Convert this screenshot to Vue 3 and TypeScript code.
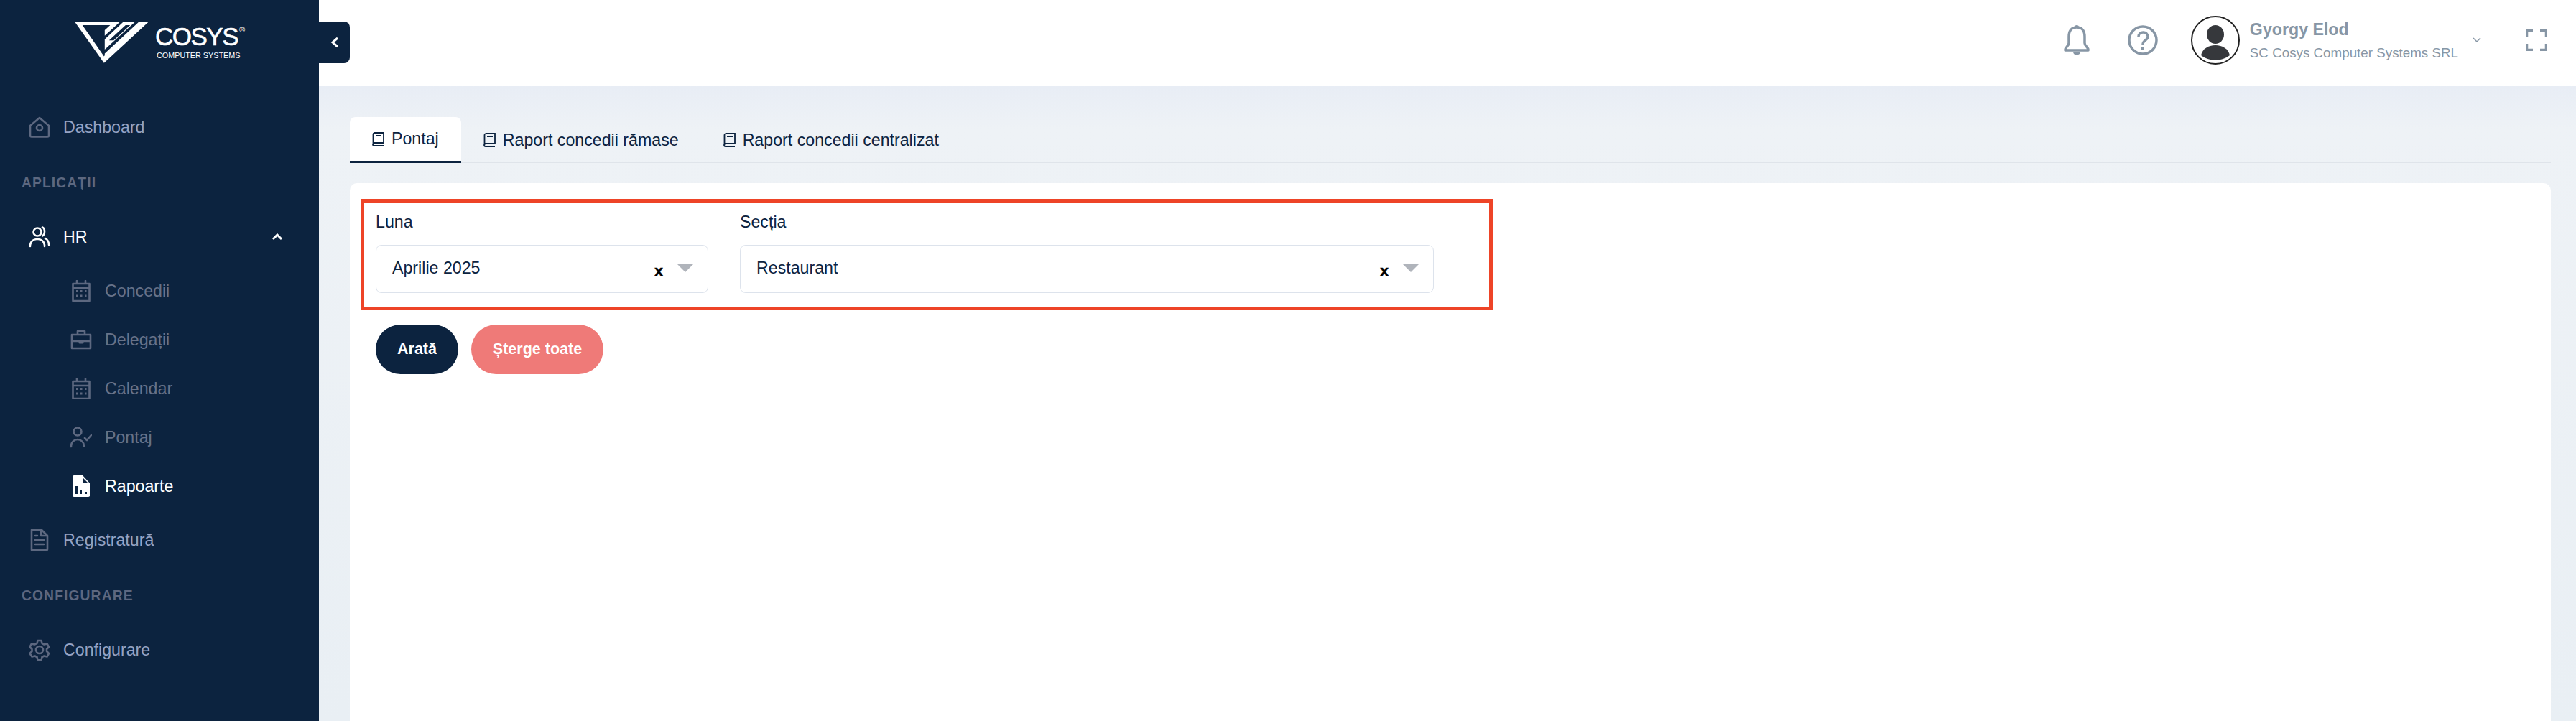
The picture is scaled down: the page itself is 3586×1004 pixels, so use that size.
<template>
  <div class="app">
    <aside class="sidebar">
      <div class="logo">
        <svg class="logo-mark" viewBox="133 90 308 172" width="103" height="58">
          <path fill="#fff" d="M133 90H300L283 104H165L255 234 258 230V222L401 90H441L255 262Z" />
          <path fill="#fff" fill-rule="evenodd" d="M258 125L296 90H322L258 148ZM258 163L336 90H385L258 206ZM345 104H364L295 168H276Z" />
        </svg>
        <div class="logo-text">
          <span class="logo-name">COSYS<sup>®</sup></span>
          <span class="logo-sub">COMPUTER SYSTEMS</span>
        </div>
      </div>

      <a class="item">
        <svg class="icon" viewBox="0 0 30 30"><path d="M2 13L15 2l13 11v13.500a2 2 0 0 1-2 2H4a2 2 0 0 1-2-2z" /><circle cx="15" cy="16" r="4" /></svg>
        <span>Dashboard</span>
      </a>
      <div class="section">APLICAȚII</div>
      <a class="item open">
        <svg class="icon" viewBox="0 0 30 30"><circle cx="12" cy="8" r="5.500" /><path d="M2 28v-2a9 9 0 0 1 9-8h2a9 9 0 0 1 9 8v2M19 1.500c4 1.500 4 10 0 12M23 17c3 1 5 5 5 9" /></svg>
        <span>HR</span>
        <svg class="chevron" viewBox="0 0 16 10"><path d="M2 8l6-6 6 6" /></svg>
      </a>
      <div class="subs">
        <a v-for="sub in subItems" :key="sub.label" class="sub" :class="{ active: sub.active }">
          <svg v-if="sub.icon === 'calendar'" class="icon" viewBox="0 0 30 30"><path d="M3.500 5h23v24h-23zM3.500 11h23M9 1v4M21 1v4" /><path class="dots" d="M8 15.500h2.500M14 15.500h2.500M20 15.500h2.500M8 22h2.500M14 22h2.500M20 22h2.500" /></svg>
          <svg v-else-if="sub.icon === 'briefcase'" class="icon" viewBox="0 0 30 30"><path d="M2 8h26v19H2zM2 17h26M10 8V3h10v5" /><path class="dots" d="M13 17v2h4v-2" /></svg>
          <svg v-else-if="sub.icon === 'user'" class="icon" viewBox="0 0 30 30"><circle cx="10" cy="7" r="5.500" /><path d="M1 28v-1a9 9 0 0 1 18 0M20 16l3 3 6-7" /></svg>
          <svg v-else class="icon filled" viewBox="0 0 30 30"><path fill-rule="evenodd" d="M5 0h12l10 11v17a2 2 0 0 1-2 2H5a2 2 0 0 1-2-2V2a2 2 0 0 1 2-2zM17 3v8h8zM7 15v11h3V15zM13 20v6h3v-6zM20 23v3h3v-3z" /></svg>
          <span>{{ sub.label }}</span>
        </a>
      </div>
      <a class="item registry">
        <svg class="icon" viewBox="0 0 30 30"><path d="M4 1h14l8 8v19a1 1 0 0 1-1 1H4zM17 1v8h9M9 15h12M9 21h12M9 9h3" /></svg>
        <span>Registratură</span>
      </a>
      <div class="section">CONFIGURARE</div>
      <a class="item">
        <svg class="icon" viewBox="0 0 30 30"><circle cx="15" cy="15" r="5" /><path d="M12.500 2h5l1 4 3 1.500 4-1 2.500 4.500-3 3v3l3 3-2.500 4.500-4-1-3 1.500-1 4h-5l-1-4-3-1.500-4 1L1.500 20l3-3v-3l-3-3L4 6.500l4 1L11.500 6z" /></svg>
        <span>Configurare</span>
      </a>
    </aside>

    <div class="main">
      <header class="topbar">
        <button class="collapse" type="button" aria-label="Restrânge meniul">
          <svg viewBox="0 0 12 16" width="12" height="16"><path d="M10 2L3 8l7 6" /></svg>
        </button>
        <div class="top-actions">
          <svg class="top-icon" viewBox="0 0 38 42" width="38" height="42"><path d="M19 3c-8 0-11 6-11 13v9c0 4-5 6-5 9v1h32v-1c0-3-5-5-5-9v-9c0-7-3-13-11-13z" /><path class="solid" d="M14 37h10c0 6-10 6-10 0zM16 3a3 3 0 0 1 6 0z" /></svg>
          <svg class="top-icon help" viewBox="0 0 42 42" width="42" height="42"><circle cx="21" cy="21" r="19" /><path d="M15 16c0-8 13-8 13 0 0 5-7 5-7 11" /><path class="solid" d="M19 30h4v4h-4z" /></svg>
          <div class="user">
            <svg class="avatar" viewBox="0 0 68 68" width="68" height="68"><circle cx="34" cy="34" r="33" /><ellipse class="solid" cx="34" cy="26" rx="12" ry="13" /><path class="solid" d="M14 55c2-9 10-14 20-14s18 5 20 14c-11 9-29 9-40 0z" /></svg>
            <div class="user-text">
              <strong>Gyorgy Elod</strong>
              <span>SC Cosys Computer Systems SRL</span>
            </div>
            <svg class="user-caret" viewBox="0 0 12 8" width="12" height="8"><path d="M1 1l5 5 5-5" /></svg>
          </div>
          <svg class="top-icon expand" viewBox="0 0 30 30" width="30" height="30"><path d="M1.500 10V1.500H10M20 1.500h8.500V10M1.500 20v8.500H10M20 28.500h8.500V20" /></svg>
        </div>
      </header>

      <main class="content">
        <nav class="tabs">
          <a v-for="(tab, i) in tabs" :key="tab" class="tab" :class="{ active: i === 0 }">
            <svg class="book" viewBox="0 0 18 20" width="18" height="20"><path d="M3 1h13v14H3a2 2 0 0 0 0 4h13M1.500 17V3A2 2 0 0 1 3 1M5 5h8" /></svg>
            {{ tab }}
          </a>
        </nav>
        <section class="card">
          <div class="filters">
            <div v-for="field in fields" :key="field.label" class="field" :class="field.cls">
              <label>{{ field.label }}</label>
              <div class="select">
                <span class="value">{{ field.value }}</span>
                <span class="clear">x</span>
                <span class="arrow"></span>
              </div>
            </div>
          </div>
          <div class="buttons">
            <button class="btn primary" type="button">Arată</button>
            <button class="btn danger" type="button">Șterge toate</button>
          </div>
        </section>
      </main>
    </div>
  </div>
</template>

<script setup lang="ts">
type SubItem = {
  label: string
  icon: 'calendar' | 'briefcase' | 'user' | 'file'
  active?: boolean
}

const subItems: SubItem[] = [
  { label: 'Concedii', icon: 'calendar' },
  { label: 'Delegații', icon: 'briefcase' },
  { label: 'Calendar', icon: 'calendar' },
  { label: 'Pontaj', icon: 'user' },
  { label: 'Rapoarte', icon: 'file', active: true },
]

const tabs = ['Pontaj', 'Raport concedii rămase', 'Raport concedii centralizat']

const fields = [
  { label: 'Luna', value: 'Aprilie 2025', cls: 'month' },
  { label: 'Secția', value: 'Restaurant', cls: 'dept' },
]
</script>

<style>
html,
body {
  margin: 0;
  overflow: hidden;
}
</style>

<style scoped>
.app {
  display: flex;
  height: 1004px;
  overflow: hidden;
  font-family: "Liberation Sans", Arial, sans-serif;
  font-size: 23.2px;
  color: #0c233f;
}

.sidebar {
  flex: 0 0 444px;
  background: #0c233f;
  color: #96a3c4;
}

.logo {
  display: flex;
  height: 143px;
  box-sizing: border-box;
  padding: 30px 0 0 104px;
  gap: 9px;
  align-items: flex-start;
}

.logo-text {
  display: flex;
  flex-direction: column;
  color: #fff;
}

.logo-name {
  font-size: 35px;
  line-height: 30px;
  margin-top: 6px;
  letter-spacing: -1.5px;
  -webkit-text-stroke: 0.6px #fff;
}

.logo-name sup {
  font-size: 11px;
  line-height: 0;
  letter-spacing: 0;
  vertical-align: 18px;
  margin-left: 2px;
  -webkit-text-stroke: 0;
}

.logo-sub {
  font-size: 10.800px;
  line-height: 16px;
  margin: 3px 0 0 2px;
  white-space: nowrap;
}

.item {
  display: flex;
  align-items: center;
  height: 68px;
  padding-left: 40px;
  gap: 18px;
}

.item.open {
  color: #fff;
  position: relative;
}

.item.open .icon {
  stroke: #fff;
}

.registry {
  margin-top: 7px;
}

.icon {
  width: 30px;
  height: 30px;
  flex: none;
  fill: none;
  stroke: #5d6880;
  stroke-width: 2.600;
  stroke-linejoin: round;
  stroke-linecap: round;
}

.icon .dots {
  stroke-width: 3;
  stroke-linecap: butt;
}

.icon.filled {
  fill: #fff;
  stroke: none;
}

.chevron {
  width: 16px;
  height: 10px;
  margin-left: 238px;
  fill: none;
  stroke: #fff;
  stroke-width: 3;
}

.section {
  height: 85px;
  box-sizing: border-box;
  padding: 33px 0 0 30px;
  font-size: 19.300px;
  line-height: 22px;
  font-weight: 700;
  letter-spacing: 1.100px;
  color: #5d6880;
}

.subs {
  margin-top: 7px;
}

.sub {
  display: flex;
  align-items: center;
  height: 68px;
  padding-left: 98px;
  gap: 18px;
  color: #677289;
}

.sub.active {
  color: #fff;
}

.main {
  flex: 1;
  min-width: 0;
  display: flex;
  flex-direction: column;
}

.topbar {
  flex: 0 0 120px;
  display: flex;
  justify-content: space-between;
  background: #fff;
}

.collapse {
  width: 43px;
  height: 58px;
  margin-top: 30px;
  padding: 0;
  border: 0;
  border-radius: 0 8px 8px 0;
  background: #0c233f;
}

.collapse svg {
  display: block;
  margin: 0 auto;
  fill: none;
  stroke: #fff;
  stroke-width: 3;
}

.top-actions {
  display: flex;
  align-items: center;
  padding: 0 40px 0 0;
  height: 112px;
}

.top-icon {
  fill: none;
  stroke: #8796a5;
  stroke-width: 3.500;
  stroke-linejoin: round;
}

.top-icon .solid {
  fill: #8796a5;
  stroke: none;
}

.help {
  margin-left: 52px;
}

.expand {
  margin-left: 62px;
  stroke-width: 3.500;
  stroke-linejoin: miter;
}

.user {
  display: flex;
  align-items: center;
  margin-left: 46px;
}

.avatar {
  fill: #fff;
  stroke: #222;
  stroke-width: 2;
}

.avatar .solid {
  fill: #36383c;
  stroke: none;
}

.user-text {
  display: flex;
  flex-direction: column;
  margin-left: 14px;
  color: #8796a5;
}

.user-text strong {
  font-size: 23.200px;
  line-height: 30px;
}

.user-text span {
  font-size: 18.800px;
  line-height: 26px;
  margin-top: 5px;
  white-space: nowrap;
}

.user-caret {
  margin-left: 20px;
  fill: none;
  stroke: #8796a5;
  stroke-width: 1.500;
}

.content {
  flex: 1;
  min-height: 0;
  padding: 43px 35px 0 43px;
  background: linear-gradient(#e8edf5, #eef2f6 60px, #e9eff4);
}

.tabs {
  display: flex;
  height: 62px;
  border-bottom: 2px solid #dfe4ea;
  box-sizing: content-box;
}

.tab {
  display: flex;
  align-items: center;
  gap: 9px;
  height: 64px;
  padding: 0 31px;
  box-sizing: border-box;
  white-space: nowrap;
}

.tab.active {
  background: #fff;
  border-radius: 8px 8px 0 0;
  border-bottom: 3px solid #0c233f;
}

.book {
  fill: none;
  stroke: #0c233f;
  stroke-width: 1.800;
}

.card {
  background: #fff;
  border-radius: 10px 10px 0 0;
  margin-top: 28px;
  height: 800px;
  padding: 22px 15px 0;
}

.filters {
  display: flex;
  gap: 44px;
  width: 1576px;
  height: 155px;
  box-sizing: border-box;
  padding: 13px 16px 0;
  border: 5px solid #ee4427;
}

.field label {
  display: block;
  line-height: 28px;
  margin-bottom: 18px;
}

.month {
  flex: 0 0 463px;
}

.dept {
  flex: 0 0 966px;
}

.select {
  display: flex;
  align-items: center;
  height: 67px;
  box-sizing: border-box;
  padding: 0 20px 0 22px;
  border: 1px solid #dde3ec;
  border-radius: 8px;
}

.value {
  flex: 1;
  padding-bottom: 2px;
}

.clear {
  margin: 4px 20px 0 0;
  font-size: 21px;
  font-weight: 700;
  color: #000;
  -webkit-text-stroke: 0.5px #000;
}

.arrow {
  width: 0;
  height: 0;
  border-left: 11px solid transparent;
  border-right: 11px solid transparent;
  border-top: 11px solid #b0b4bb;
  margin-bottom: 2px;
}

.buttons {
  display: flex;
  gap: 18px;
  margin: 20px 0 0 21px;
}

.btn {
  height: 69px;
  border: 0;
  border-radius: 35px;
  font-family: inherit;
  font-size: 21.500px;
  font-weight: 700;
  color: #fff;
}

.primary {
  width: 115px;
  background: #0c233f;
}

.danger {
  width: 184px;
  background: #ef7a78;
}
</style>
